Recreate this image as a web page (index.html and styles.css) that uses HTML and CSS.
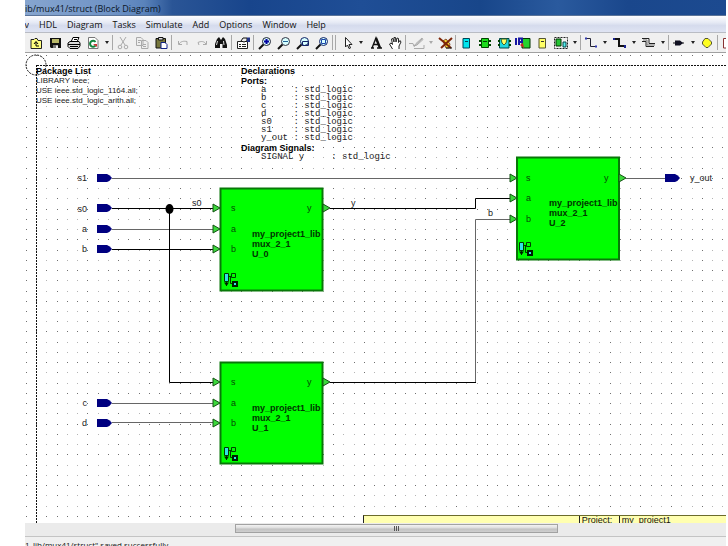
FILE: index.html
```html
<!DOCTYPE html>
<html lang="en">
<head>
<meta charset="utf-8">
<title>lib/mux41/struct (Block Diagram)</title>
<link rel="stylesheet" href="styles.css">
</head>
<body>
<div class="app">
  <header class="titlebar">ib/mux41/struct (Block Diagram)</header>
  <nav class="menubar">
    <a href="#" class="cut">v</a><a href="#">HDL</a><a href="#">Diagram</a><a href="#">Tasks</a><a href="#">Simulate</a><a href="#">Add</a><a href="#">Options</a><a href="#">Window</a><a href="#">Help</a>
  </nav>
  <div class="toolbar" role="toolbar" aria-label="Diagram tools">
    <button class="tool" aria-label="Open"><svg viewBox="0 0 16 14"><path d="M3 12.500V3.500H6L7 2.500H9L10 4.500H13.500V12.500Z" fill="#ffff80" stroke="#222"/><path d="M8 10V6M6 8L8 5.500L10 8M8 10H11" fill="none" stroke="#000"/></svg></button>
    <button class="tool" aria-label="Save"><svg viewBox="0 0 16 14"><path d="M3 2H14V12H4L3 11Z" fill="#111"/><path d="M5 3H12V7H5Z" fill="#b9b96a"/><path d="M6 9H11V12H6Z" fill="#777"/><path d="M9 9.500H11V12H9Z" fill="#eee"/></svg></button>
    <button class="tool" aria-label="Print"><svg viewBox="0 0 16 14"><path d="M5 6L7 1.500H13L11 6" fill="#fff" stroke="#000"/><path d="M2 7L4 5.500H13L14 7V10L12 12.500H4L2 10.500Z" fill="#ddd" stroke="#000"/><path d="M2 8.500H14M4 10.500H12M8 3.500H11" stroke="#000"/></svg></button>
    <button class="tool" aria-label="Refresh"><svg viewBox="0 0 16 14"><path d="M3.500 1.500H10L13 4.500V12.500H3.500Z" fill="#fff" stroke="#777"/><path d="M10.500 6A3 3 0 1 0 10.500 9.500" fill="none" stroke="#14853d" stroke-width="2"/><path d="M8 8H12V11Z" fill="#c33"/></svg></button>
    <button class="drop" aria-label="Refresh options"></button>
    <span class="sep tight"></span>
    <button class="tool" aria-label="Cut"><svg viewBox="0 0 16 14"><path d="M5 1L10 9M11 1L6 9" stroke="#aaa" fill="none"/><circle cx="5" cy="11" r="1.800" fill="none" stroke="#aaa"/><circle cx="11" cy="11" r="1.800" fill="none" stroke="#aaa"/></svg></button>
    <button class="tool" aria-label="Copy"><svg viewBox="0 0 16 14"><path d="M2.500 1.500H7L9 3.500V9.500H2.500ZM7.500 4.500H12L14 6.500V12.500H7.500Z" fill="#eee" stroke="#aaa"/><path d="M4 4.500H7M4 6.500H6M9 8.500H12M9 10.500H12" stroke="#aaa"/></svg></button>
    <button class="tool" aria-label="Paste"><svg viewBox="0 0 16 14"><path d="M3 2.500H12.500V12H3Z" fill="#77773c" stroke="#111"/><path d="M5.500 1.500H10V4H5.500Z" fill="#ddd" stroke="#111"/><path d="M8 6.500H12L14 8.500V12.500H8Z" fill="#fff" stroke="#112288"/></svg></button>
    <span class="sep"></span>
    <button class="tool" aria-label="Undo"><svg viewBox="0 0 16 14"><path d="M3.500 5V8.500H7M4 8C6 5 9 5 12 5.500V9" fill="none" stroke="#aaa"/></svg></button>
    <button class="tool" aria-label="Redo"><svg viewBox="0 0 16 14"><path d="M12.500 5V8.500H9M12 8C10 5 7 5 4 6.500L5 9" fill="none" stroke="#aaa"/></svg></button>
    <button class="tool" aria-label="Find"><svg viewBox="0 0 16 14"><path d="M4 3L6 1L8 4L10 1L12 3L14 9V12H9.500V8H7V12H2V8Z" fill="#111"/><path d="M4.500 5L3.500 9M10.500 5L11 9" stroke="#ddd"/></svg></button>
    <span class="sep"></span>
    <button class="tool" aria-label="Properties"><svg viewBox="0 0 16 14"><path d="M2.500 5.500H12.500V12.500H2.500Z" fill="#fff" stroke="#222"/><path d="M4 8.500H6M7 8.500H11M4 10.500H6M7 10.500H11" stroke="#222"/><path d="M6 5L8 2H12V5L9 6Z" fill="#eee" stroke="#111"/><path d="M12 1.500H15V6H12Z" fill="#223388"/></svg></button>
    <span class="sep"></span>
    <button class="tool" aria-label="Zoom in"><svg viewBox="0 0 16 14"><path d="M7 8L2 13" stroke="#111" stroke-width="2"/><circle cx="9.500" cy="5.500" r="4" fill="#d8ffff" stroke="#223"/><path d="M7 5.500H12M9.500 3V8" stroke="#0000a0" stroke-width="2"/></svg></button>
    <button class="tool" aria-label="Zoom out"><svg viewBox="0 0 16 14"><path d="M7 8L2 13" stroke="#111" stroke-width="2"/><circle cx="9.500" cy="5.500" r="4" fill="#d8ffff" stroke="#334"/><path d="M7 5.500H12" stroke="#226699"/></svg></button>
    <button class="tool" aria-label="Zoom area"><svg viewBox="0 0 16 14"><path d="M7 8L2 13" stroke="#111" stroke-width="2"/><circle cx="9.500" cy="5.500" r="4" fill="#d8ffff" stroke="#112266"/><path d="M7.500 9.500V5.500H13.500V9.500Z" fill="none" stroke="#112266"/></svg></button>
    <button class="tool" aria-label="Zoom to fit"><svg viewBox="0 0 16 14"><path d="M7 8L2 13" stroke="#111" stroke-width="2"/><circle cx="9.500" cy="5.500" r="4" fill="#d8ffff" stroke="#112266"/><path d="M7.500 3.500H11.500V7.500H7.500Z" fill="none" stroke="#1a44aa"/></svg></button>
    <span class="sep"></span>
    <span class="sep"></span>
    <button class="tool" aria-label="Select"><svg viewBox="0 0 16 14"><path d="M6.500 1.500V11L8.500 9L10 12.500L11.500 12L10 8.500H13Z" fill="#fff" stroke="#222"/></svg></button>
    <button class="drop" aria-label="Select options"></button>
    <button class="tool" aria-label="Text"><svg viewBox="0 0 16 14"><path d="M3 12H6M4 12L8 2L12 12M9 12H14M5.500 8.500H10" fill="none" stroke="#111" stroke-width="1.400"/><path d="M8 2L12 12" stroke="#111" stroke-width="2.400"/></svg></button>
    <button class="tool" aria-label="Pan"><svg viewBox="0 0 16 14"><path d="M5.500 13L2.500 8L4 7L5.500 8.500L4.500 3L6 2.500L7 6V1.500H8.500L9 6L10 2L11.500 2.500V6.500L13 4.500L14 6L12 10V13" fill="#fff" stroke="#222"/></svg></button>
    <span class="sep"></span>
    <button class="tool" aria-label="Comment"><svg viewBox="0 0 16 14"><path d="M0 7.500H4L5 10.500L13 3M5 10L7 7.500L13 2L14 3.500L8 9ZM5 12.500H15V9" fill="none" stroke="#aaa"/></svg></button>
    <button class="drop dim" aria-label="Comment options"></button>
    <button class="tool" aria-label="Clear markers"><svg viewBox="0 0 16 14"><path d="M5 5L8 3L12 8L11 12H8Z" fill="#f4d82a" stroke="#853"/><path d="M1 2L13 12M14 2L3 12" stroke="#7d2408" stroke-width="2"/><path d="M8 12H14" stroke="#111"/></svg></button>
    <span class="sep tight"></span>
    <button class="tool" aria-label="Block"><svg viewBox="0 0 16 14"><path d="M5 2.500H11.500V12H5Z" fill="#00e5ee" stroke="#045"/><path d="M7 5.500H10" stroke="#045"/></svg></button>
    <button class="tool" aria-label="Component"><svg viewBox="0 0 16 14"><path d="M4.500 2.500H11.500V11.500H4.500Z" fill="#1ddc1d" stroke="#040"/><path d="M2 5H5M2 9H5M11 5H14M11 9H14" stroke="#040" stroke-width="2"/><path d="M6 5.500H10" stroke="#040"/></svg></button>
    <button class="tool" aria-label="ModuleWare"><svg viewBox="0 0 16 14"><path d="M3.500 2.500H13V12H3.500Z" fill="#21d8dd" stroke="#044"/><path d="M2 5H4M2 9H4M13 5H15M13 9H15" stroke="#040" stroke-width="2"/><path d="M5 3H11L10 7L8 9L6 7Z" fill="#ffff60" stroke="#363"/></svg></button>
    <button class="tool" aria-label="IP block"><svg viewBox="0 0 16 14"><path d="M7 2.500H15V12H7Z" fill="#24d32c" stroke="#030"/><path d="M1 2V9M4 9V2.500H7V6H4" fill="none" stroke="#1717a3" stroke-width="2"/><path d="M5 9L8 7L9 12Z" fill="#c22"/></svg></button>
    <button class="tool" aria-label="Embedded block"><svg viewBox="0 0 16 14"><path d="M5 2.500H11.500V12H5Z" fill="#ffff66" stroke="#553"/><path d="M7 5.500H10" stroke="#333"/></svg></button>
    <button class="tool" aria-label="Frame"><svg viewBox="0 0 16 14"><rect x="1.500" y="1.500" width="13" height="11" fill="none" stroke="#222" stroke-dasharray="2 1"/><path d="M3 3H8V10H3Z" fill="#24c432" stroke="#030"/><path d="M10 6H13V11H10Z" fill="#5ee" stroke="#044"/></svg></button>
    <button class="drop" aria-label="Frame options"></button>
    <span class="sep tight"></span>
    <button class="tool" aria-label="Signal"><svg viewBox="0 0 16 14"><path d="M3 2.500H7.500V10.500H13" fill="none" stroke="#223"/><path d="M2 1.500H4V3.500H2ZM12 9.500H14V11.500H12Z" fill="#3038b0"/></svg></button>
    <button class="drop" aria-label="Signal options"></button>
    <button class="tool" aria-label="Bus"><svg viewBox="0 0 16 14"><path d="M2 3H7V10H13" fill="none" stroke="#111" stroke-width="2"/><path d="M1 2H3V4H1ZM12 9H14V12H12Z" fill="#1b2491"/></svg></button>
    <button class="drop" aria-label="Bus options"></button>
    <button class="tool" aria-label="Bundle"><svg viewBox="0 0 16 14"><path d="M1 2.500H8V7.500H14M1 5.500H5V10.500H13" fill="none" stroke="#222"/><path d="M2 4H6V9H14" fill="none" stroke="#777"/></svg></button>
    <button class="drop" aria-label="Bundle options"></button>
    <span class="sep tight"></span>
    <button class="tool" aria-label="Port"><svg viewBox="0 0 16 14"><path d="M2 7H13" stroke="#111"/><path d="M4 4.500H9L12 7L9 9.500H4Z" fill="#112"/></svg></button>
    <button class="drop" aria-label="Port options"></button>
    <button class="tool" aria-label="Global connector"><svg viewBox="0 0 16 14"><path d="M5 2.500H8L11.500 6V8L8 11.500H6L2.500 8V6Z" fill="#ffff20" stroke="#553"/></svg></button>
    <span class="sep tight"></span>
    <button class="tool" aria-label="Panel"><svg viewBox="0 0 16 14"><path d="M3.500 2.500H13V12H3.500Z" fill="#fff" stroke="#833"/></svg></button>
  </div>

  <main class="canvas">
    <svg class="diagram" role="img" aria-label="mux41 block diagram">
      <defs>
        <path id="port" d="M0-4H10Q13-3 15 0Q13 3 10 4H0Z" fill="#000080"/>
        <path id="pin" d="M0-4L7 0L0 4Z" fill="#3bd83b" stroke="#145214"/>
        <g id="hier" fill="none" stroke="#003c00">
          <path d="M.5.500H4.500V8.500H.5Z" fill="#33e0e6"/>
          <path d="M5 3.500H8M7.500.500H11.500V4.500H7.500ZM2.500 9V13M6.500 4V10.500H9"/>
          <path d="M0 9.500H5L2.500 13Z" fill="#001e00" stroke="none"/>
          <path d="M9 9H13V13H9Z" fill="#33e0e6" stroke="#001e00" stroke-width="2"/>
        </g>
      </defs>
      <g transform="translate(-25 -53)">
        <path class="grid strong" id="grid-strong"/>
        <path class="grid" id="grid-soft"/>
        <path class="page-edge" d="M37 65.500H726M36.500 65V523"/>
        <circle class="page-edge" cx="36" cy="65" r="10"/>
        <g class="wires">
          <path class="thin" d="M112 178.500H510M112 229.500H213M112 403.500H213M112 422.500H213M626 178.500H666M475.500 382V219.500H510"/>
          <path d="M112 208.500H213M169.500 208V382.500H213M112 249.500H213M330 208.500H475.500V198.500H510M330 382.500H476"/>
          <ellipse cx="169.500" cy="209" rx="4" ry="5"/>
        </g>
        <use href="#port" x="97" y="178"/><use href="#port" x="97" y="208"/><use href="#port" x="97" y="229"/><use href="#port" x="97" y="249"/><use href="#port" x="97" y="403"/><use href="#port" x="97" y="423"/><use href="#port" x="665" y="178"/>
        <g class="block"><rect x="220.500" y="188.500" width="102" height="102"/><rect x="220.500" y="362.500" width="102" height="101"/><rect x="517" y="157.500" width="102" height="102"/></g>
        <use href="#pin" x="213" y="208"/><use href="#pin" x="213" y="229"/><use href="#pin" x="213" y="249"/><use href="#pin" x="323" y="208"/>
        <use href="#pin" x="213" y="382"/><use href="#pin" x="213" y="403"/><use href="#pin" x="213" y="423"/><use href="#pin" x="323" y="382"/>
        <use href="#pin" x="510" y="178"/><use href="#pin" x="510" y="198"/><use href="#pin" x="510" y="219"/><use href="#pin" x="619" y="178"/>
        <use href="#hier" x="224" y="273"/><use href="#hier" x="224" y="447"/><use href="#hier" x="519" y="242"/>
        <g class="net">
          <g text-anchor="end"><text x="87" y="181">s1</text><text x="87" y="212">s0</text><text x="87" y="232">a</text><text x="87" y="252">b</text><text x="87" y="406">c</text><text x="87" y="426">d</text></g>
          <text x="192" y="206">s0</text><text x="351" y="206">y</text><text x="488" y="216">b</text><text x="690" y="181">y_out</text>
        </g>
        <g class="pins">
          <text x="231" y="211">s</text><text x="231" y="232">a</text><text x="231" y="252">b</text><text x="307" y="211">y</text>
          <text x="231" y="385">s</text><text x="231" y="406">a</text><text x="231" y="426">b</text><text x="307" y="385">y</text>
          <text x="526" y="181">s</text><text x="526" y="201">a</text><text x="526" y="222">b</text><text x="604" y="181">y</text>
        </g>
        <g class="names">
          <text x="252" y="237">my_project1_lib</text><text x="252" y="247">mux_2_1</text><text x="252" y="257">U_0</text>
          <text x="252" y="411">my_project1_lib</text><text x="252" y="421">mux_2_1</text><text x="252" y="431">U_1</text>
          <text x="549" y="206">my_project1_lib</text><text x="549" y="216">mux_2_1</text><text x="549" y="226">U_2</text>
        </g>
      </g>
    </svg>
    <section class="note packages">
      <h2>Package List</h2>
      <p>LIBRARY ieee;</p>
      <p>USE ieee.std_logic_1164.all;</p>
      <p>USE ieee.std_logic_arith.all;</p>
    </section>
    <section class="note declarations">
      <h2>Declarations</h2>
      <h2>Ports:</h2>
<pre>a     : std_logic
b     : std_logic
c     : std_logic
d     : std_logic
s0    : std_logic
s1    : std_logic
y_out : std_logic</pre>
      <h2>Diagram Signals:</h2>
<pre>SIGNAL y     : std_logic</pre>
    </section>
    <div class="title-block"><span></span><span>Project:</span><span>my_project1</span></div>
  </main>
  <div class="scrollbar"><div class="thumb"><i></i><i></i><i></i></div></div>
  <footer class="status">1_lib/mux41/struct" saved successfully.</footer>
</div>
<script src="grid.js"></script>
</body>
</html>
```
FILE: styles.css
```css
* { box-sizing: border-box; }
body { margin: 0; background: #fff; font-family: "Open Sans", sans-serif; font-size: 9px; color: #111; }
.app { display: flex; flex-direction: column; height: 100vh; margin: 0 2px 0 25px; overflow: hidden; }

.titlebar {
  flex: none; height: 16px; line-height: 17px; white-space: nowrap; color: #0c1626;
  border-bottom: 1px solid #5b7499;
  background: linear-gradient(90deg, #86a5cf 0, #7094c6 12%, #5a83bb 17%, #2a5596 21%, #18458c 32%, #1f4e96 48%, #18468a 65%, #2a5a9e 76%, #1a478c 86%, #1c4a90 100%);
}
.menubar {
  flex: none; display: flex; gap: 10px; height: 16px; line-height: 17px;
  background: linear-gradient(#fdfdff, #e6eaf5 40%, #d5dbed 60%, #dfe4f3);
}
.menubar a { color: #111; text-decoration: none; }
.menubar .cut { width: 4px; display: flex; justify-content: flex-end; overflow: hidden; }

.toolbar {
  flex: none; display: flex; align-items: center; height: 21px; padding-left: 1px; overflow: hidden;
  background: #f0f0f0; border-top: 1px solid #b9bcc4; border-bottom: 1px solid #a0a0a0;
}
.toolbar button { flex: none; display: flex; align-items: center; justify-content: center; height: 19px; padding: 0; border: 0; background: none; }
.toolbar .tool { width: 19px; }
.tool svg { width: 16px; height: 14px; }
.toolbar .drop { width: 10px; }
.drop::before { content: ""; border: 2px solid transparent; border-top: 3px solid #222; border-bottom: 0; }
.drop.dim::before { border-top-color: #aaa; }
.sep { flex: none; width: 1px; height: 15px; margin: 0 1px; background: #a8a8a8; }
.sep.tight { margin: 0; }

.canvas { position: relative; flex: 1; min-height: 0; overflow: hidden; background: #fff; }
.diagram { display: block; width: 100%; height: 100%; font-family: "Liberation Sans", sans-serif; font-size: 9px; }
.grid { fill: #b4b4b4; shape-rendering: crispEdges; }
.grid.strong { fill: #707070; }
.page-edge { fill: none; stroke: #111; stroke-dasharray: 2 1; }
.wires path { fill: none; stroke: #000; }
.wires .thin { stroke: #666; }
.block rect { fill: #00ff00; stroke: #087808; stroke-width: 2; }
.net { fill: #222; }
.pins { fill: #064a06; }
.names { fill: #003400; font-weight: bold; }

.note { position: absolute; font-family: "Liberation Sans", sans-serif; line-height: 10px; color: #222; white-space: nowrap; }
.note h2, .note p, .note pre { margin: 0; font-size: 9px; }
.note h2 { color: #000; }
.note p { font-size: 8px; }
.note pre { padding: 0 0 1px 20px; font-family: "Liberation Mono", monospace; line-height: 8px; }
.packages { left: 11px; top: 13px; }
.declarations { left: 216px; top: 13px; }

.title-block {
  position: absolute; left: 338px; right: 0; bottom: 0; display: grid; grid-template-columns: 2fr 40px 1fr;
  height: 8px; overflow: hidden; background: #ffffb0; border-top: 1px solid #6b6b2c; border-left: 1px solid #222;
  font-family: "Liberation Sans", sans-serif; line-height: 8px;
}
.title-block span + span { padding-left: 2px; border-left: 1px solid #222; }

.scrollbar { flex: none; display: flex; height: 14px; padding: 1px 24% 3px 30%; background: #ebebeb; border-bottom: 1px solid #c4c4c4; }
.thumb { flex: 1; display: flex; align-items: center; justify-content: center; gap: 1px; border: 1px solid #a2a2a2; background: linear-gradient(#f2f2f2, #dcdcdc 45%, #c2c2c2 55%, #cfcfcf); }
.thumb i { width: 1px; height: 5px; background: #555; }
.status { flex: none; height: 9px; padding-top: 2px; font-size: 8px; line-height: 12px; white-space: nowrap; overflow: hidden; background: #f0f0f0; }
```
FILE: grid.js
```js
// Snap grid: one dot per grid step, rounded to whole pixels so that dots stay crisp.
const step = 10.24;
const paths = { strong: "", soft: "" };
for (let row = 0; row < 46; row++) {
  for (let col = 0; col < 69; col++) {
    const x = Math.round(26 + col * step);
    const y = Math.round(55 + row * step);
    const kind = col % 3 === 0 || row % 3 === 0 ? "strong" : "soft";
    paths[kind] += `M${x} ${y}h1v1h-1z`;
  }
}
document.getElementById("grid-strong").setAttribute("d", paths.strong);
document.getElementById("grid-soft").setAttribute("d", paths.soft);
```
